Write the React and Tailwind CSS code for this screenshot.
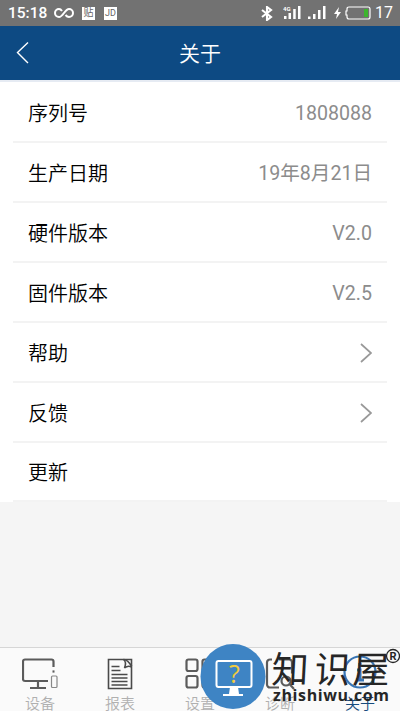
const infoRows = [
  { label: '序列号', value: '1808088' },
  { label: '生产日期', value: '19年8月21日' },
  { label: '硬件版本', value: 'V2.0' },
  { label: '固件版本', value: 'V2.5' },
  { label: '帮助', link: true },
  { label: '反馈', link: true },
  { label: '更新' },
];

const tabs = [
  { label: '设备', icon: DeviceIcon },
  { label: '报表', icon: ReportIcon },
  { label: '设置', icon: SettingsIcon },
  { label: '诊断', icon: DiagnosisIcon },
  { label: '关于', icon: AboutIcon, active: true },
];

function DeviceIcon() {
  return (
    <svg width="36" height="32" viewBox="0 0 36 32" fill="none" stroke="#5b5b5b" strokeWidth="2.2">
      <path d="M26 23H3a2 2 0 0 1-2-2V3.500a2 2 0 0 1 2-2h26.500a2 2 0 0 1 2 2v5.500M16 23v6.500M8 30h16" />
      <path d="M30.500 13.500h2" />
      <rect x="29.500" y="18" width="5.500" height="11.500" rx="1" stroke="#888" strokeWidth="1.200" />
    </svg>
  );
}

function ReportIcon() {
  return (
    <svg width="26" height="32" viewBox="0 0 26 32" fill="none" stroke="#4a4a4a" strokeWidth="1.600">
      <path d="M17 1.500H1.500v29h23V8C22 4 20 2 17 1.500" />
      <path d="M16.500 1.500h8V8M16.500 1.500c2.500 2 2.500 5 1 8.500 2.500-2 5-2 7-1" />
      <path d="M4.500 8.500h8M4.500 12.500h9M4.500 16.500h16M4.500 20h16M4.500 23.500h16M4.500 27h16" />
    </svg>
  );
}

function SettingsIcon() {
  return (
    <svg width="30" height="32" viewBox="0 0 30 32" fill="none" stroke="#5b5b5b" strokeWidth="2.200">
      <rect x="1.500" y="1.500" width="11" height="11.500" rx="2" />
      <rect x="17.500" y="1.500" width="11" height="11.500" rx="2" />
      <rect x="1.500" y="18" width="11" height="11.500" rx="2" />
      <rect x="17.500" y="18" width="11" height="11.500" rx="2" />
    </svg>
  );
}

function DiagnosisIcon() {
  return (
    <svg width="30" height="32" viewBox="0 0 30 32" fill="none" stroke="#5b5b5b" strokeWidth="2.200">
      <path d="M7 1.500H5a3 3 0 0 0-3 3v22a3 3 0 0 0 3 3h9M14 1.500h10a3 3 0 0 1 3 3v11" />
      <circle cx="21" cy="23" r="4.500" />
      <path d="m24.500 26 4.500 5" />
    </svg>
  );
}

function AboutIcon() {
  return (
    <svg className="-mt-1" width="36" height="36" viewBox="0 0 36 36" fill="none" stroke="#3975b4" strokeWidth="2.200">
      <circle cx="18" cy="18" r="15.500" />
      <path d="M18 9v3M15 16h3v10M14 26h8" strokeWidth="3" />
    </svg>
  );
}

function Signal({ lte }) {
  return (
    <svg width="18" height="14" viewBox="0 0 18 14" fill="#fff">
      {lte ? (
        <>
          <path d="M1 10h2.500v3H1zM5.500 7H8v6H5.500zM10.200 3h2.500v10h-2.500zM15 0h2.500v13H15z" />
          <text x="0" y="5" fontSize="6" fontWeight="700">4G</text>
        </>
      ) : (
        <path d="M0 10.500h2.500V13H0zM5 8h2.500v5H5zM10 4h2.500v9H10zM15 0h2.500v13H15z" />
      )}
    </svg>
  );
}

function StatusBar() {
  return (
    <div className="flex h-[26px] shrink-0 items-center bg-[#727272] pl-2 pr-[7px] text-white">
      <span className="w-[39px] text-[15.5px] font-medium leading-[26px]">15:18</span>
      <svg className="ml-[7px]" width="20" height="12" viewBox="0 0 20 12" fill="none" stroke="#fff" strokeWidth="2">
        <path d="M8 4C7 2.500 6 2 5 2a4 4 0 0 0 0 8c4 0 6-8 10-8a4 4 0 0 1 0 8c-1.500 0-2.500-.8-3.500-2" />
      </svg>
      <span className="ml-2 flex h-[13px] w-[13px] items-center justify-center bg-white text-[10px] leading-none text-[#666]">贴</span>
      <span className="ml-[9px] flex h-[13px] w-[13px] items-center justify-center bg-white text-[9px] leading-none text-[#666]">JD</span>
      <div className="ml-auto flex items-center">
        <svg width="12" height="15" viewBox="0 0 12 15" fill="none" stroke="#fff" strokeWidth="2.100">
          <path d="m1 4 9 7-4 3V1l4 3-9 7" />
        </svg>
        <div className="ml-[10px] flex">
          <Signal lte />
        </div>
        <div className="ml-[7px] flex">
          <Signal />
        </div>
        <svg className="ml-2" width="7" height="12" viewBox="0 0 7 12" fill="#fff">
          <path d="M5 0 0 7h3l-1 5 5-7H4z" />
        </svg>
        <svg className="ml-1" width="26" height="14" viewBox="0 0 26 14" fill="none">
          <path d="M4 1h19q2 0 2 2v8q0 2-2 2H4q-2 0-2-2V9H1V5h1V3q0-2 2-2z" stroke="#fff" strokeWidth="1.200" />
          <path d="M19 3h4v8h-4z" fill="#3db52e" />
        </svg>
        <span className="ml-1 text-[16px] leading-[26px]">17</span>
      </div>
    </div>
  );
}

function Watermark() {
  return (
    <div className="pointer-events-none absolute bottom-0 left-[200px] h-[68px] w-[200px]">
      <svg width="200" height="68" viewBox="0 0 200 68">
        <circle cx="33" cy="33.500" r="32.500" fill="#3e84c4" />
        <rect x="16.500" y="18" width="35" height="26" rx="2" fill="none" stroke="#fff" strokeWidth="2" />
        <path d="M30 44h8l1 7h4v2H23v-2h6z" fill="#fff" />
        <text x="34.500" y="40" textAnchor="middle" fontSize="25" fontWeight="500" fill="#f2cb3d" fontFamily="'Open Sans', sans-serif">?</text>
        <g fill="#262626">
          <g fontFamily="'Noto Sans CJK SC', sans-serif" fontSize="37">
            <text transform="translate(71 40) skewX(-3)">知</text>
            <text transform="translate(114 40) skewX(-3) scale(.96 1)">识</text>
            <text transform="translate(152 40) skewX(-3)">屋</text>
          </g>
          <text x="73" y="58" fontSize="16" fontWeight="700" textLength="116" fontFamily="'Open Sans', sans-serif">zhishiwu.com</text>
          <text x="193" y="17" textAnchor="middle" fontSize="11" fontWeight="700">R</text>
        </g>
        <circle cx="193" cy="13" r="6.500" fill="none" stroke="#262626" strokeWidth="1.300" />
      </svg>
    </div>
  );
}

export default function App() {
  return (
    <div className="relative flex h-[711px] w-[400px] flex-col overflow-hidden bg-[#f5f5f5] font-[Roboto,'Noto_Sans_CJK_SC',sans-serif]">
      <StatusBar />

      {/* Title bar */}
      <header className="grid h-[54px] shrink-0 grid-cols-3 items-center bg-[#0d4a83] text-white">
        <svg className="ml-4" width="14" height="22" viewBox="0 0 14 22" fill="none" stroke="#fff" strokeWidth="1.400">
          <path d="M12 .5 1.500 10.500 12 21" />
        </svg>
        <h1 className="pb-[3px] text-center font-['Noto_Sans_CJK_SC',sans-serif] text-[21px] font-[350] leading-7">关于</h1>
      </header>

      {/* Device info */}
      <ul className="shrink-0 border-t-2 border-[#e6ebf3] bg-white pt-px">
        {infoRows.map((row) => (
          <li key={row.label} className="mx-[13px] flex h-[60px] items-center justify-between border-b-2 border-[#f3f3f3] px-[15px] pt-px text-[20px] last:h-[59px]">
            <span className="font-['Noto_Sans_CJK_SC',sans-serif] font-[350] text-black">{row.label}</span>
            {row.value && <span className="pt-[2px] text-[19.6px] text-[#8c8c8c]">{row.value}</span>}
            {row.link && (
              <svg width="12" height="20" viewBox="0 0 12 20" fill="none" stroke="#999" strokeWidth="1.700">
                <path d="m1 1 10 9-10 9" />
              </svg>
            )}
          </li>
        ))}
      </ul>

      {/* Bottom tabs */}
      <nav className="mt-auto grid h-16 shrink-0 grid-cols-5 border-t border-[#d6d6d6] bg-[#fafafa]">
        {tabs.map(({ label, icon: Icon, active }) => (
          <div key={label} className="flex flex-col items-center pt-[9px]">
            <div className="flex h-[34px] items-center">
              <Icon />
            </div>
            <span
              className={
                active
                  ? "font-['Noto_Sans_CJK_SC',sans-serif] text-[15px] font-[350] leading-[23px] text-[#174b7d]"
                  : "font-['Noto_Sans_CJK_SC',sans-serif] text-[15px] font-[350] leading-[23px] text-[#b0b0b0]"
              }
            >
              {label}
            </span>
          </div>
        ))}
      </nav>

      <Watermark />
    </div>
  );
}
